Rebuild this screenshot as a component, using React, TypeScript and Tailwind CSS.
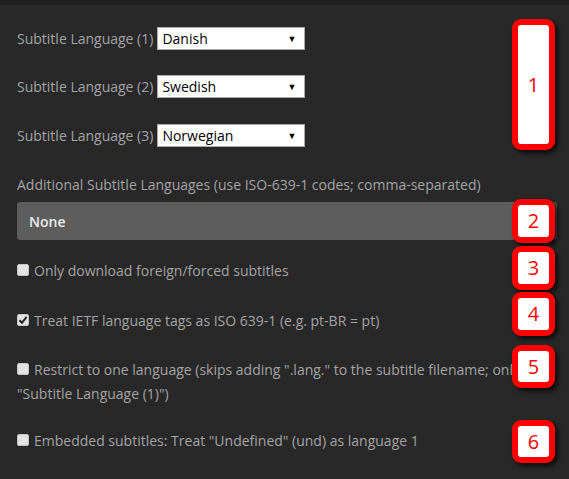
import { Fragment } from 'react';

const font = { fontFamily: '"Open Sans", "Noto Sans", sans-serif' };

function Select({ value }: { value: string }) {
  return (
    <div className="flex h-[23px] w-[148px] items-center justify-between border border-[#a9a9a9] bg-white pl-[4px] pr-[8px] text-[14px] text-black">
      <span>{value}</span>
      <span className="text-[9px] leading-none">▼</span>
    </div>
  );
}

function Checkbox({ checked }: { checked?: boolean }) {
  return (
    <span className="mt-[-2px] flex h-[12px] w-[12px] shrink-0 items-center justify-center rounded-[2px] border border-[#c4c4c4] bg-[#e2e2e2]">
      {checked ? (
        <svg width="10" height="10" viewBox="0 0 10 10">
          <path d="M1.5 5.2 L4 7.8 L8.6 1.8" fill="none" stroke="#222" strokeWidth="2" />
        </svg>
      ) : null}
    </span>
  );
}

function Badge({ n, top, height }: { n: number; top: string; height: string }) {
  return (
    <div
      className={`absolute left-[512px] flex w-[43px] items-center justify-center rounded-[9px] border-[6px] border-[#ff0000] bg-white text-[20px] text-[#ff0000] shadow-[3px_3px_4px_rgba(0,0,0,0.75)] ${top} ${height}`}
    >
      {n}
    </div>
  );
}

const languages = ['Danish', 'Swedish', 'Norwegian'];
const rowMargins = ['mt-[22px]', 'mt-[25px]', 'mt-[26px]'];

export default function App() {
  return (
    <div
      className="relative h-[479px] w-full overflow-hidden bg-[#282828] text-[14px] text-[#a4a4a4]"
      style={font}
    >
      <div className="h-[5px] bg-[#1f1f1f]" />

      <div className="px-[17px]">
        {languages.map((lang, i) => (
          <div key={lang} className={`flex h-[23px] items-center ${rowMargins[i]}`}>
            <span className="mr-[4px]">Subtitle Language ({i + 1})</span>
            <Select value={lang} />
          </div>
        ))}

        <div className="mt-[29px] leading-[18px]">
          Additional Subtitle Languages (use ISO-639-1 codes; comma-separated)
        </div>

        <div className="mr-[-5px] mt-[8px] flex h-[38px] items-center rounded-[3px] bg-[#5d5d5d] px-[12px] text-[14px] font-semibold text-[#ececec]">
          None
        </div>

        <div className="mt-[19px] flex items-center gap-[5px] leading-[24px]">
          <Checkbox />
          <span>Only download foreign/forced subtitles</span>
        </div>

        <div className="mt-[26px] flex items-center gap-[5px] leading-[24px]">
          <Checkbox checked />
          <span>Treat IETF language tags as ISO 639-1 (e.g. pt-BR = pt)</span>
        </div>

        <div className="mt-[25px] leading-[24px]">
          <div className="flex items-center gap-[5px] whitespace-nowrap">
            <Checkbox />
            <span>
              Restrict to one language (skips adding ".lang." to the subtitle filename; only
            </span>
          </div>
          <div>"Subtitle Language (1)")</div>
        </div>

        <div className="mt-[23px] flex items-center gap-[5px] leading-[24px]">
          <Checkbox />
          <span>Embedded subtitles: Treat "Undefined" (und) as language 1</span>
        </div>
      </div>

      <Fragment>
        <Badge n={1} top="top-[19px]" height="h-[131px]" />
        <Badge n={2} top="top-[199px]" height="h-[44px]" />
        <Badge n={3} top="top-[246px]" height="h-[44px]" />
        <Badge n={4} top="top-[292px]" height="h-[44px]" />
        <Badge n={5} top="top-[345px]" height="h-[43px]" />
        <Badge n={6} top="top-[420px]" height="h-[43px]" />
      </Fragment>
    </div>
  );
}
